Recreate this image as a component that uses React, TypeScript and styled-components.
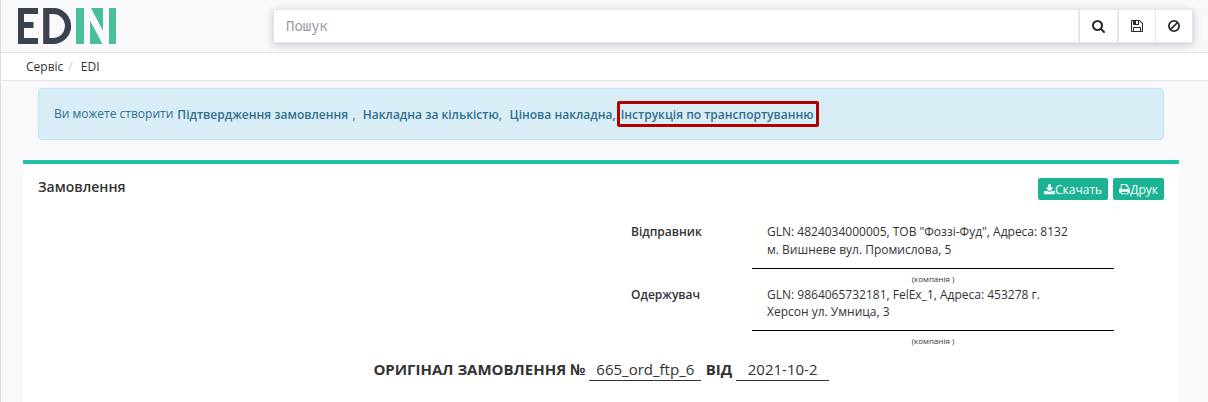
import React from "react";
import styled, { createGlobalStyle } from "styled-components";

const GlobalStyle = createGlobalStyle`
  * { box-sizing: border-box; }
  body {
    margin: 0;
    background: #f9f9fb;
    color: #333;
    font-family: "Open Sans", "Noto Sans", sans-serif;
    font-size: 12px;
    line-height: 18px;
  }
`;

const Page = styled.div`
  height: 402px;
  overflow: hidden;
  border-left: 1px solid #dcdde0;
`;

const Header = styled.header`
  display: flex;
  justify-content: space-between;
  align-items: flex-start;
  height: 53px;
  padding: 8px 15px 0 17px;
  border-bottom: 1px solid #e4e7ea;
`;

const SearchBar = styled.div`
  display: flex;
  width: 920px;
  height: 34px;
  margin-top: 1px;
  background: #fff;
  border: 1px solid #e5e6e7;
  box-shadow: 0 2px 8px rgba(60, 70, 100, 0.28);
`;

const SearchInput = styled.input`
  flex: 1;
  min-width: 0;
  padding: 0 12px;
  border: 0;
  outline: 0;
  background: transparent;
  font: 14px/32px "Noto Sans Mono", "DejaVu Sans Mono", monospace;
  &::placeholder { color: #999; opacity: 1; }
`;

const SearchButton = styled.button<{ $width: number; $edge?: number }>`
  display: flex;
  align-items: center;
  justify-content: center;
  width: ${(p) => p.$width}px;
  padding: 0;
  border: 0;
  border-left: ${(p) => p.$edge ?? 2}px solid #e5e6e7;
  background: #fff;
  color: #2b2b2b;
`;

const Breadcrumb = styled.nav`
  display: flex;
  align-items: center;
  height: 28px;
  padding-left: 25px;
  background: #fff;
  border-bottom: 1px solid #e4e7ea;
`;

const Divider = styled.span`
  width: 17.5px;
  padding-left: 5px;
  color: #ccc;
`;

const Alert = styled.div`
  display: flex;
  align-items: center;
  height: 52px;
  margin: 7px 44px 0 37px;
  padding: 0 15px;
  background: #d9edf7;
  border: 1px solid #bce8f1;
  border-radius: 4px;
  color: #31708f;
  white-space: pre;
`;

const AlertLink = styled.a<{ $gap?: number }>`
  margin: 2px 0 0 ${(p) => p.$gap ?? 0}px;
  font-weight: 600;
`;

const Comma = styled.span<{ $gap?: number }>`
  margin: 2px 0 0 ${(p) => p.$gap ?? 0}px;
`;

const Highlight = styled.span`
  display: flex;
  align-items: center;
  height: 26px;
  margin: 0 0 0 1px;
  padding: 0 2.5px 0 1px;
  border: 3px solid #b30000;
  border-radius: 2px;
`;

const Panel = styled.main`
  height: 260px;
  margin: 20px 29px 0 22px;
  background: #fff;
  border-top: 4px solid #1fc3a4;
`;

const PanelHead = styled.div`
  display: flex;
  justify-content: space-between;
  padding: 14px 15px 0;
`;

const Title = styled.h5`
  margin: 0;
  font-size: 14px;
  font-weight: 600;
`;

const Actions = styled.div`
  display: flex;
  gap: 5px;
`;

const ActionButton = styled.button<{ $width: number }>`
  display: flex;
  align-items: center;
  justify-content: center;
  width: ${(p) => p.$width}px;
  height: 22px;
  padding: 1px 0 0;
  border: 0;
  border-radius: 2px;
  background: #1ab394;
  color: #fff;
  font: 12px/18px "Open Sans", "Noto Sans", sans-serif;
`;

const Parties = styled.section`
  display: grid;
  grid-template-columns: 121px 362px;
  margin: 23px 0 0 608px;
`;

const PartyLabel = styled.div`
  font-weight: 600;
`;

const Address = styled.div<{ $height: number; $leading: number }>`
  height: ${(p) => p.$height}px;
  padding-left: 15px;
  border-bottom: 1px solid #000;
  line-height: ${(p) => p.$leading}px;
  white-space: pre;
`;

const Caption = styled.div<{ $height: number }>`
  height: ${(p) => p.$height}px;
  padding-top: 5px;
  font-size: 8px;
  line-height: 10px;
  text-align: center;
`;

const OrderLine = styled.h4`
  display: flex;
  margin: 8px 0 0 350.4px;
  font-size: 15px;
  font-weight: 700;
  line-height: 21px;
  white-space: nowrap;
`;

const Blank = styled.span<{ $width: number }>`
  width: ${(p) => p.$width}px;
  height: 22px;
  margin: 0 4.4px 0 3.9px;
  border-bottom: 1px solid #333;
  font-weight: 400;
  text-align: center;
`;

const Logo = () => (
  <svg width="99" height="37" viewBox="0 0 99 37">
    <g fill="#3a424e">
      <rect y="0" width="6" height="36" />
      <rect y="0" width="20" height="6" />
      <rect y="14" width="15.5" height="6" />
      <rect y="30" width="20" height="6" />
    </g>
    <path d="M28.3 3H35a15 15 0 0 1 0 30h-6.7z" fill="none" stroke="#3a424e" strokeWidth="6.2" />
    <g fill="#48bf98">
      <rect x="58" width="8" height="36" />
      <rect x="91" width="7" height="36" />
      <polygon points="73,0 85,0 85,23" />
      <polygon points="72,12.5 84.5,36 72,36" />
    </g>
  </svg>
);

const Icon = ({ d, box, width, height = width }: { d: string; box: string; width: number; height?: number }) => (
  <svg width={width} height={height} viewBox={box} fill="currentColor">
    <path d={d} />
  </svg>
);

const searchPath =
  "M1152 704q0-185-131.5-316.5t-316.5-131.5-316.5 131.5-131.5 316.5 131.5 316.5 316.5 131.5 316.5-131.5 131.5-316.5zm512 832q0 52-38 90t-90 38q-54 0-90-38l-343-342q-179 124-399 124-143 0-273.5-55.5t-225-150-150-225-55.5-273.5 55.5-273.5 150-225 225-150 273.5-55.5 273.5 55.5 225 150 150 225 55.5 273.5q0 220-124 399l343 343q37 37 37 90z";
const savePath =
  "M384 1536h768v-384h-768v384zm896 0h128v-896q0-14-10-38.5t-20-34.5l-281-281q-10-10-34-20t-39-10v416q0 40-28 68t-68 28h-576q-40 0-68-28t-28-68v-416h-128v1280h128v-416q0-40 28-68t68-28h832q40 0 68 28t28 68v416zm-384-928v-320q0-13-9.5-22.5t-22.5-9.5h-192q-13 0-22.5 9.5t-9.5 22.5v320q0 13 9.5 22.5t22.5 9.5h192q13 0 22.5-9.5t9.5-22.5zm640 32v928q0 40-28 68t-68 28h-1344q-40 0-68-28t-28-68v-1344q0-40 28-68t68-28h928q40 0 88 20t76 48l280 280q28 28 48 76t20 88z";
const downloadPath =
  "M1280 1344q0-26-19-45t-45-19-45 19-19 45 19 45 45 19 45-19 19-45zm256 0q0-26-19-45t-45-19-45 19-19 45 19 45 45 19 45-19 19-45zm128-224v320q0 40-28 68t-68 28h-1472q-40 0-68-28t-28-68v-320q0-40 28-68t68-28h465l135 136q58 56 136 56t136-56l136-136h464q40 0 68 28t28 68zm-325-569q17 41-14 70l-448 448q-18 19-45 19t-45-19l-448-448q-31-29-14-70 17-39 59-39h256v-448q0-26 19-45t45-19h256q26 0 45 19t19 45v448h256q42 0 59 39z";
const printPath =
  "M384 1408h896v-256h-896v256zm0-640h896v-384h-160q-40 0-68-28t-28-68v-160h-640v640zm1152 64q0-26-19-45t-45-19-45 19-19 45 19 45 45 19 45-19 19-45zm128 0v416q0 13-9.5 22.5t-22.5 9.5h-224v160q0 40-28 68t-68 28h-960q-40 0-68-28t-28-68v-160h-224q-13 0-22.5-9.5t-9.5-22.5v-416q0-79 56.5-135.5t135.5-56.5h64v-544q0-40 28-68t68-28h672q40 0 88 20t76 48l152 152q28 28 48 76t20 88v256h64q79 0 135.5 56.5t56.5 135.5z";

const BanIcon = () => (
  <svg width="12" height="12" viewBox="0 0 12 12" fill="none" stroke="currentColor" strokeWidth="1.8">
    <circle cx="6" cy="6" r="5.1" />
    <path d="M2.4 9.6l7.2-7.2" />
  </svg>
);

export default function App() {
  return (
    <Page>
      <GlobalStyle />
      <Header>
        <Logo />
        <SearchBar>
          <SearchInput placeholder="Пошук" />
          <SearchButton $width={39}>
            <Icon d={searchPath} box="0 0 1664 1664" width={13} />
          </SearchButton>
          <SearchButton $width={38}>
            <Icon d={savePath} box="0 128 1536 1536" width={12} />
          </SearchButton>
          <SearchButton $width={37} $edge={1}>
            <BanIcon />
          </SearchButton>
        </SearchBar>
      </Header>
      <Breadcrumb>
        <span>Сервіс</span>
        <Divider>/</Divider>
        <span>EDI</span>
      </Breadcrumb>
      <Alert>
        <span>Ви можете створити</span>
        <AlertLink $gap={4}>Підтвердження замовлення</AlertLink>
        <Comma $gap={4.4}>,</Comma>
        <AlertLink $gap={7.2}>Накладна за кількістю</AlertLink>
        <Comma>,</Comma>
        <AlertLink $gap={7.8}>Цінова накладна,</AlertLink>
        <Highlight>
          <AlertLink as="strong">Інструкція по транспортуванню</AlertLink>
        </Highlight>
      </Alert>
      <Panel>
        <PanelHead>
          <Title>Замовлення</Title>
          <Actions>
            <ActionButton $width={70}>
              <Icon d={downloadPath} box="0 0 1664 1536" width={11.2} height={10.4} />
              Скачать
            </ActionButton>
            <ActionButton $width={51}>
              <Icon d={printPath} box="0 0 1664 1536" width={11.2} height={10.4} />
              Друк
            </ActionButton>
          </Actions>
        </PanelHead>
        <Parties>
          <PartyLabel>Відправник</PartyLabel>
          <div>
            <Address $height={46} $leading={18}>
              {'GLN: 4824034000005, ТОВ "Фоззі-Фуд", Адреса: 8132\nм. Вишневе вул. Промислова, 5'}
            </Address>
            <Caption $height={17}>(компанія )</Caption>
          </div>
          <PartyLabel>Одержувач</PartyLabel>
          <div>
            <Address $height={45} $leading={17}>
              {"GLN: 9864065732181, FelEx_1, Адреса: 453278 г.\nХерсон ул. Умница, 3"}
            </Address>
            <Caption $height={20}>(компанія )</Caption>
          </div>
        </Parties>
        <OrderLine>
          <span>ОРИГІНАЛ ЗАМОВЛЕННЯ №</span>
          <Blank $width={112}>665_ord_ftp_6</Blank>
          <span>ВІД</span>
          <Blank $width={93}>2021-10-2</Blank>
        </OrderLine>
      </Panel>
    </Page>
  );
}
